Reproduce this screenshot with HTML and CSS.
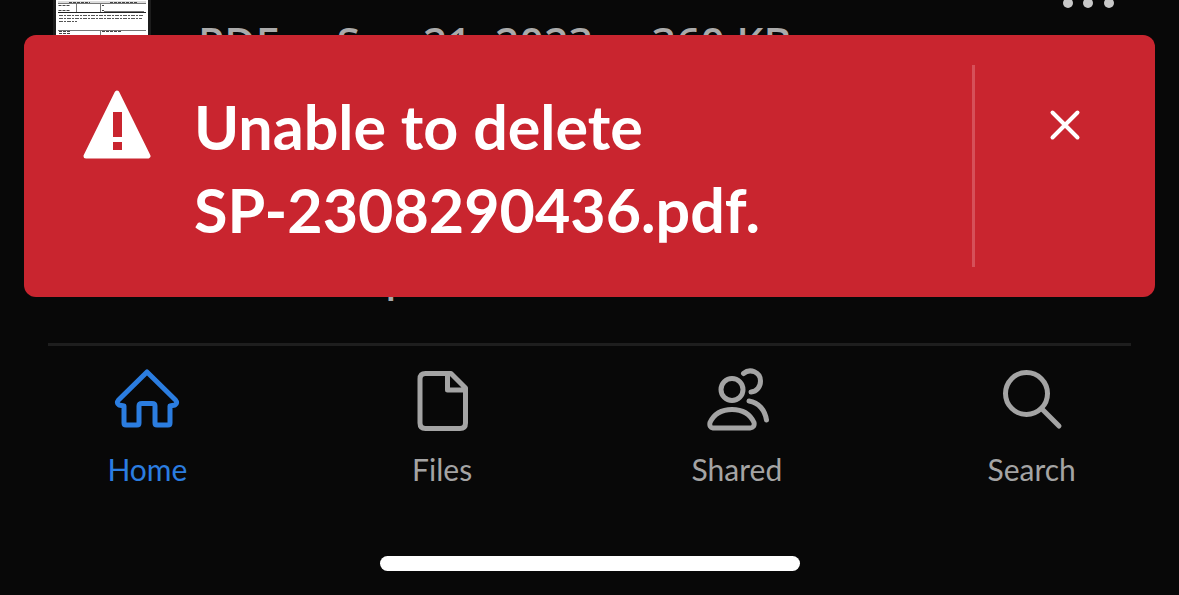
FILE: index.html
```
<!DOCTYPE html>
<html lang="en">
<head>
<meta charset="utf-8">
<meta name="viewport" content="width=device-width, initial-scale=1">
<title>Files</title>
<link rel="stylesheet" href="styles.css">
</head>
<body>
<main class="content">
  <ul class="file-list">
    <li class="file">
      <svg class="thumb" viewBox="0 0 98 60" aria-hidden="true">
        <rect width="98" height="60" fill="#1c1c1c"/>
        <rect x="3" width="92" height="60" fill="#fff"/>
        <path d="M5 1h88v3H5z" fill="#ddd"/>
        <path d="M5 3.500h88M23.500 4v8M47.500 4v8M51 11.500h40" stroke="#777" stroke-width="1"/>
        <path d="M5 12.500h88" stroke="#222" stroke-width="1"/>
        <path d="M16 2.500h21M57 2.500h27" stroke="#444" stroke-width="1" stroke-dasharray="3 1"/>
        <path d="M5.500 5.500h11M5.500 10.500h12M49 5.500h2M49 10.500h2" stroke="#444" stroke-width="1" stroke-dasharray="3 1"/>
        <path d="M6 15.500h85M6 18.500h83M6 21.500h18" stroke="#555" stroke-width="1" stroke-dasharray="4 1 2 1"/>
        <path d="M5 30.500h88M47.500 30v10" stroke="#777" stroke-width="1"/>
        <path d="M6 31.500h12M6 33.500h12M49 31.500h20" stroke="#444" stroke-width="1" stroke-dasharray="3 1"/>
      </svg>
      <p class="meta"><span>PDF</span><span>•</span><span>Sep 21, 2023</span><span>•</span><span>360 KB</span></p>
      <button class="more" type="button" aria-label="More options">
        <svg width="54" height="8" viewBox="0 0 54 8" fill="#c8c8c8"><circle cx="7" cy="3" r="5"/><circle cx="27" cy="3" r="5"/><circle cx="48" cy="3" r="5"/></svg>
      </button>
    </li>
    <li class="file">
      <p class="meta"><span>PDF</span><span>•</span><span>Sep 21, 2023</span></p>
    </li>
  </ul>
  <section class="toast" role="alert">
    <svg class="alert-icon" width="70" height="70" viewBox="0 0 70 70" aria-hidden="true">
      <path d="M35 3 66 66H4Z" fill="#fff" stroke="#fff" stroke-width="5" stroke-linejoin="round"/>
      <path d="M31 22h9v25h-9zM31 52h9v8h-9z" fill="#c9252f"/>
    </svg>
    <p class="message">Unable to delete<br>SP-2308290436.pdf.</p>
    <div class="dismiss">
      <button class="close" type="button" aria-label="Close">
        <svg width="32" height="32" viewBox="0 0 32 32" fill="none" stroke="#fff" stroke-width="4" stroke-linecap="round"><path d="M3.500 3.500 28.500 28.500M28.500 3.500 3.500 28.500"/></svg>
      </button>
    </div>
  </section>
</main>
<nav class="tabs">
  <a class="tab active" href="#home" aria-current="page">
    <svg viewBox="0 0 66 66"><path d="M33 4 4.500 32Q2 35 5 37L10 38V55Q10 57 12 57H23Q25 57 25 55V38Q25 35.500 28 35.500H38Q41 35.500 41 38V55Q41 57 43 57H54Q56 57 56 55V38L61 37Q64 35 61.500 32Z"/></svg>
    <span>Home</span>
  </a>
  <a class="tab" href="#files">
    <svg viewBox="0 0 66 66"><path d="M16.500 5.500H42L56.500 20V55Q56.500 60.500 51 60.500H16.500Q11 60.500 11 55V11Q11 5.500 16.500 5.500ZM38.500 6V22H56"/></svg>
    <span>Files</span>
  </a>
  <a class="tab" href="#shared">
    <svg viewBox="0 0 66 66"><circle cx="28" cy="21.500" r="11"/><path d="M9 60H46Q51 59.500 50 54.500C46 46 38 41.500 28 41.500S10 46 6 54.500Q5 59.500 9 60ZM39.500 5.500C46 0 56.500 4 56.500 13C56.500 18.500 53 23.500 47 24M45 33C55 34.500 61 42.500 62.500 52"/></svg>
    <span>Shared</span>
  </a>
  <a class="tab" href="#search">
    <svg viewBox="0 0 66 66"><circle cx="27.500" cy="25.500" r="21"/><path d="M42.500 40.500 60 58"/></svg>
    <span>Search</span>
  </a>
</nav>
<div class="home-indicator"></div>
</body>
</html>
```
FILE: styles.css
```
* { box-sizing: border-box; }

body {
  margin: 0;
  min-height: 100vh;
  display: flex;
  flex-direction: column;
  background: #080808;
  color: #a4a4a4;
  font-family: Lato, "Noto Sans", sans-serif;
}

p, ul { margin: 0; padding: 0; }

button {
  padding: 0;
  border: 0;
  background: none;
  cursor: pointer;
}

svg { display: block; }

.content {
  position: relative;
  flex: 1;
}

.file-list { list-style: none; }

.file {
  display: grid;
  grid-template-columns: 98px 1fr auto;
  column-gap: 47px;
  align-items: start;
  padding: 0 64px 0 53px;
}

.file + .file { margin-top: 159px; }

.thumb { width: 98px; }

.meta {
  grid-column: 2;
  display: flex;
  gap: 21px;
  padding-top: 13px;
  font-family: "Noto Sans", sans-serif;
  font-size: 43px;
  font-weight: 500;
  line-height: 60px;
  color: #aaa;
  white-space: nowrap;
}

.toast {
  position: absolute;
  top: 35px;
  left: 24px;
  right: 24px;
  display: flex;
  align-items: stretch;
  padding: 30px 0;
  border-radius: 12px;
  background: #c9252f;
  color: #fff;
}

.alert-icon {
  flex: none;
  margin: 25px 42px 0 58px;
}

.message {
  flex: 1;
  padding: 20px 0 16px;
  font-size: 61px;
  font-weight: 700;
  line-height: 83px;
}

.dismiss {
  width: 183px;
  padding-top: 44px;
  border-left: 3px solid #d65059;
}

.close {
  display: block;
  margin: 0 auto;
}

.tabs {
  position: relative;
  display: grid;
  grid-template-columns: repeat(4, 1fr);
  padding-top: 25px;
}

.tabs::before {
  content: "";
  position: absolute;
  top: 0;
  left: 48px;
  right: 48px;
  height: 3px;
  background: #1e1e1e;
}

.tab {
  display: flex;
  flex-direction: column;
  align-items: center;
  gap: 15px;
  color: #a4a4a4;
  font-size: 30px;
  line-height: 40px;
  text-decoration: none;
}

.tab svg {
  width: 66px;
  height: 66px;
  fill: none;
  stroke: currentColor;
  stroke-width: 5;
  stroke-linecap: round;
  stroke-linejoin: round;
}

.tab.active { color: #2b7de0; }

.home-indicator {
  width: 420px;
  max-width: 60%;
  height: 15px;
  margin: 67px auto 24px;
  border-radius: 8px;
  background: #fff;
}
```
